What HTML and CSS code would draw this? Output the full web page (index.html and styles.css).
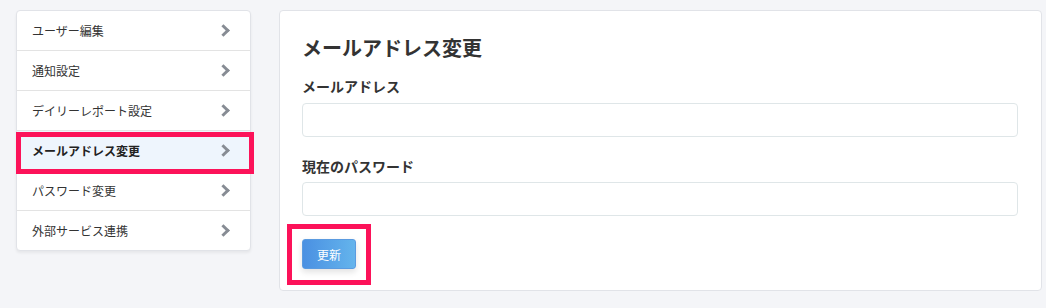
FILE: index.html
```html
<!DOCTYPE html>
<html lang="ja">
<head>
    <meta charset="UTF-8">
    <title>メールアドレス変更</title>
    <link rel="stylesheet" href="styles.css">
</head>
<body>
    <div class="layout">
        <nav class="side-menu">
            <a class="menu-item" href="#">ユーザー編集<span class="chevron"></span></a>
            <a class="menu-item" href="#">通知設定<span class="chevron"></span></a>
            <a class="menu-item" href="#">デイリーレポート設定<span class="chevron"></span></a>
            <a class="menu-item active" href="#">メールアドレス変更<span class="chevron"></span><span class="mark"></span></a>
            <a class="menu-item" href="#">パスワード変更<span class="chevron"></span></a>
            <a class="menu-item" href="#">外部サービス連携<span class="chevron"></span></a>
        </nav>

        <main class="panel">
            <h1>メールアドレス変更</h1>
            <label class="field-label" for="email">メールアドレス</label>
            <input class="field" type="text" id="email">
            <label class="field-label second" for="password">現在のパスワード</label>
            <input class="field" type="password" id="password">
            <div class="actions">
                <button class="btn-update">更新</button>
                <span class="mark button-mark"></span>
            </div>
        </main>
    </div>
</body>
</html>
```

FILE: styles.css
```css
body {
    margin: 0;
    background-color: #f4f5f8;
    color: #333;
    font-family: 'Liberation Sans', 'Noto Sans CJK JP', sans-serif;
}
.layout {
    display: flex;
    align-items: flex-start;
    gap: 28px;
    padding: 10px 4px 0 16px;
}
.side-menu {
    width: 233px;
    flex-shrink: 0;
    background-color: #fff;
    border: 1px solid #e1e3e8;
    border-radius: 4px;
    box-shadow: 0 2px 3px rgba(0, 0, 0, 0.06);
}
.menu-item {
    position: relative;
    display: flex;
    align-items: center;
    justify-content: space-between;
    height: 39px;
    padding: 0 19px 0 15px;
    border-bottom: 1px solid #e3e3e3;
    color: #333;
    font-size: 12px;
    text-decoration: none;
}
.menu-item:last-child {
    border-bottom: none;
}
.menu-item.active {
    background-color: #eef5fd;
    font-weight: bold;
    color: #222;
}
.chevron {
    width: 6px;
    height: 6px;
    border-right: 3px solid #878c94;
    border-top: 3px solid #878c94;
    transform: rotate(45deg);
    margin-right: 3px;
}
.mark {
    position: absolute;
    border: 5px solid #fc1259;
}
.menu-item .mark {
    left: -1px;
    right: -4px;
    top: 1px;
    bottom: -4px;
}
.panel {
    flex: 1;
    background-color: #fff;
    border: 1px solid #e1e3e8;
    border-radius: 4px;
    padding: 24px 23px 21px 22px;
}
h1 {
    margin: 0 0 14px;
    font-size: 20px;
    line-height: 28px;
    font-weight: bold;
    color: #333;
}
.field-label {
    display: block;
    font-size: 14px;
    line-height: 20px;
    font-weight: bold;
    color: #333;
    margin-bottom: 6px;
}
.field-label.second {
    margin-top: 20px;
    margin-bottom: 5px;
}
.field {
    display: block;
    box-sizing: border-box;
    width: 100%;
    height: 34px;
    border: 1px solid #dfe6e8;
    border-radius: 4px;
    outline: none;
    padding: 0 10px;
}
.actions {
    position: relative;
    margin-top: 23px;
    display: inline-block;
}
.btn-update {
    display: block;
    width: 54px;
    height: 30px;
    border: 1px solid #5a9be0;
    border-radius: 3px;
    background: linear-gradient(to right, #4a90e2, #64b4ec);
    color: #fff;
    font-family: 'Liberation Sans', 'Noto Sans CJK JP', sans-serif;
    font-size: 12px;
    box-shadow: 0 3px 6px rgba(0, 0, 0, 0.12);
    cursor: pointer;
}
.button-mark {
    left: -15px;
    top: -15px;
    width: 74px;
    height: 51px;
}
```
